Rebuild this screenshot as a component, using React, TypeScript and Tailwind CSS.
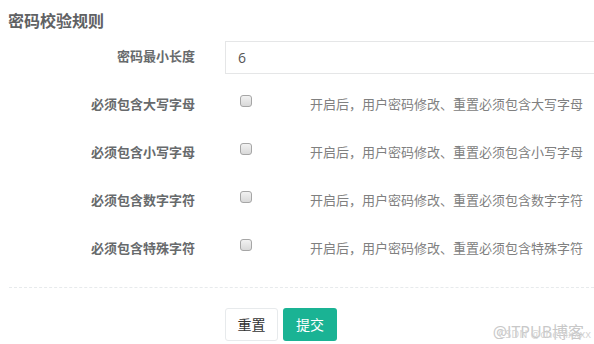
/* 密码校验规则 form */
const rules = [
  { label: '必须包含大写字母', desc: '开启后，用户密码修改、重置必须包含大写字母' },
  { label: '必须包含小写字母', desc: '开启后，用户密码修改、重置必须包含小写字母' },
  { label: '必须包含数字字符', desc: '开启后，用户密码修改、重置必须包含数字字符' },
  { label: '必须包含特殊字符', desc: '开启后，用户密码修改、重置必须包含特殊字符' },
];

const font = "font-['Open_Sans','Noto_Sans_CJK_SC',sans-serif]";

export default function App() {
  return (
    <div className={`relative w-[594px] h-[344px] overflow-hidden bg-white text-[#676a6c] ${font}`}>
      {/* ─── TITLE ─── */}
      <h3 className="h-[33px] pl-[8px] pt-[10px] text-[16px] leading-[22px] font-bold text-[#5f6163]">密码校验规则</h3>

      {/* ─── MIN LENGTH ─── */}
      <div className="flex items-center h-[48px]">
        <label className="w-[195px] text-right text-[13px] font-bold">密码最小长度</label>
        <div className="ml-[30px] flex-1 h-[33px] border border-r-0 border-[#e5e6e7] flex items-center pl-[12px] text-[14px] text-[#555]">
          6
        </div>
      </div>

      {/* ─── RULES ─── */}
      {rules.map((r) => (
        <div key={r.label} className="flex items-center h-[48px]">
          <label className="w-[195px] text-right text-[13px] font-bold">{r.label}</label>
          <div className="ml-[45px] mb-[9px] w-[12px] h-[12px] rounded-[3px] border border-[#a6a6a6] bg-gradient-to-b from-[#f2f2f2] to-[#d9d9d9]" />
          <span className="ml-[58px] mb-[1px] text-[13px] text-[#808080]">{r.desc}</span>
        </div>
      ))}

      {/* ─── DIVIDER ─── */}
      <div className="ml-[9px] mt-[14px] border-t border-dashed border-[#e7eaec]" />

      {/* ─── ACTIONS ─── */}
      <div className="flex gap-[5px] ml-[225px] mt-[20px]">
        <button className="w-[53px] h-[33px] rounded-[3px] border border-[#e7eaec] bg-white text-[14px] text-[#333]">重置</button>
        <button className="w-[54px] h-[33px] rounded-[3px] bg-[#1ab394] text-[14px] text-white">提交</button>
      </div>

      {/* ─── WATERMARK ─── */}
      <div className="absolute right-[10px] bottom-[3px] text-[16px] leading-[18px] text-[#c8c8c8]">@ITPUB博客</div>
      <div className="absolute right-[3px] bottom-[4px] text-[11px] leading-[12px] text-[#d4d4d4]">CSDN @chenlxxxx</div>
    </div>
  );
}
